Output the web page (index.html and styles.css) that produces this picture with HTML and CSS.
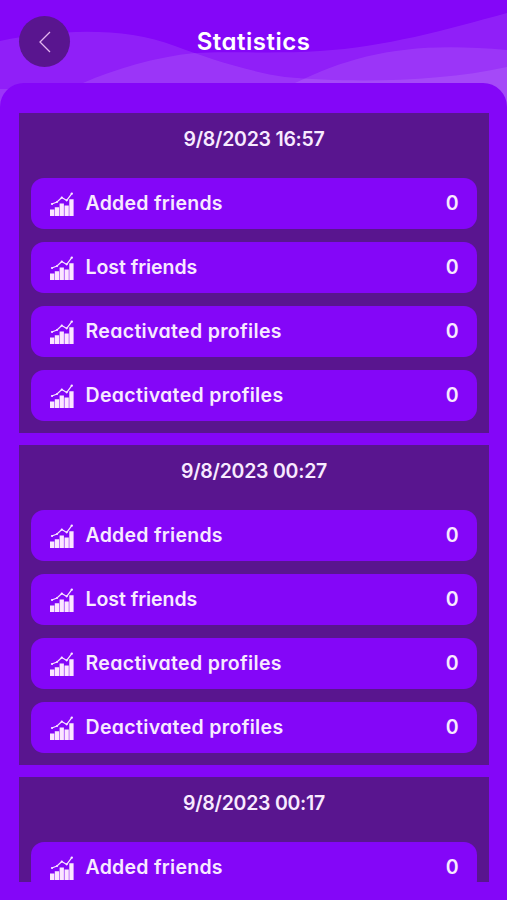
FILE: index.html
```html
<!DOCTYPE html>
<html lang="en">
<head>
<meta charset="utf-8">
<title>Statistics</title>
<link rel="stylesheet" href="styles.css">
</head>
<body>
<svg class="defs" width="0" height="0" aria-hidden="true">
  <symbol id="chart" viewBox="0 0 24 25">
    <path fill="currentColor" d="M0 17.500h4.300V24H0zM4.800 15.300h4.300V24H4.800zM9.600 11.500h4.300V24H9.600zM14.500 13.600h4.300V24h-4.300zM19.300 7.300h4.300V24h-4.300z"/>
    <path fill="none" stroke="currentColor" stroke-width="1.2" d="M1.800 12 7 10l4.800-4.400 4.900 2.800L21.800 1.600"/>
    <g fill="currentColor"><circle cx="2" cy="12" r="1.100"/><circle cx="7" cy="10" r="1"/><circle cx="11.800" cy="5.700" r="1.100"/><circle cx="16.700" cy="8.300" r="1.100"/><circle cx="21.800" cy="1.600" r="1.200"/></g>
  </symbol>
</svg>
<header class="header">
  <svg class="waves" viewBox="0 0 507 110" aria-hidden="true">
    <path d="M0 41C60 29 125 27 175 46C205 57 245 71 285 77C350 83 440 82 507 67V110H0z"/>
    <path d="M83 83C115 69 155 57 195 53C225 51 275 54 320 51C385 47 445 30 507 13V110H83z"/>
    <path d="M295 83C355 54 410 41 507 50V110H295zM0 89h8v21H0z"/>
  </svg>
  <button class="back" aria-label="Back"><svg viewBox="0 0 12 22"><path d="M11 1 1 11l10 10"/></svg></button>
  <h1 class="title">Statistics</h1>
</header>
<main class="panel">
  <div class="list">
    <section class="card">
      <h2 class="date">9/8/2023 16:57</h2>
      <div class="row"><svg class="icon"><use href="#chart"/></svg><span class="label added">Added friends</span><span class="value">0</span></div>
      <div class="row"><svg class="icon"><use href="#chart"/></svg><span class="label lost">Lost friends</span><span class="value">0</span></div>
      <div class="row"><svg class="icon"><use href="#chart"/></svg><span class="label profiles">Reactivated profiles</span><span class="value">0</span></div>
      <div class="row"><svg class="icon"><use href="#chart"/></svg><span class="label profiles">Deactivated profiles</span><span class="value">0</span></div>
    </section>
    <section class="card">
      <h2 class="date">9/8/2023 00:27</h2>
      <div class="row"><svg class="icon"><use href="#chart"/></svg><span class="label added">Added friends</span><span class="value">0</span></div>
      <div class="row"><svg class="icon"><use href="#chart"/></svg><span class="label lost">Lost friends</span><span class="value">0</span></div>
      <div class="row"><svg class="icon"><use href="#chart"/></svg><span class="label profiles">Reactivated profiles</span><span class="value">0</span></div>
      <div class="row"><svg class="icon"><use href="#chart"/></svg><span class="label profiles">Deactivated profiles</span><span class="value">0</span></div>
    </section>
    <section class="card">
      <h2 class="date">9/8/2023 00:17</h2>
      <div class="row"><svg class="icon"><use href="#chart"/></svg><span class="label added">Added friends</span><span class="value">0</span></div>
    </section>
  </div>
</main>
</body>
</html>
```
FILE: styles.css
```css
* { box-sizing: border-box; }
body {
  margin: 0;
  height: 900px;
  overflow: hidden;
  background: #8406f8;
  color: #f8eaff;
  font-family: Inter, "Open Sans", sans-serif;
  font-feature-settings: "cv11";
  font-weight: 600;
}
.defs { position: absolute; }
.header {
  position: relative;
  height: 83px;
  display: grid;
  grid-template-columns: 51px 1fr 51px;
  align-items: center;
  padding: 0 19px;
}
.waves {
  position: absolute;
  left: 0;
  top: 0;
  width: 507px;
  height: 110px;
  fill: #fff;
  fill-opacity: .1;
}
.back {
  position: relative;
  width: 51px;
  height: 51px;
  padding: 0;
  border: 0;
  border-radius: 50%;
  background: #59158f;
  display: flex;
  align-items: center;
  justify-content: center;
}
.back svg {
  width: 12px;
  height: 22px;
  fill: none;
  stroke: #e3b5ef;
  stroke-width: 1.3;
}
.title {
  position: relative;
  margin: 0;
  padding-top: 1px;
  text-align: center;
  font-size: 24px;
  letter-spacing: .5px;
  line-height: 32px;
  font-weight: 600;
  color: #fff;
}
.panel {
  position: relative;
  height: 817px;
  padding: 30px 18px 18px 19px;
  border-radius: 24px 24px 0 0;
  background: #8406f8;
}
.list {
  height: 769px;
  overflow: hidden;
  display: flex;
  flex-direction: column;
  gap: 12px;
}
.card {
  flex: none;
  height: 320px;
  padding: 0 12px;
  background: #59158f;
  display: flex;
  flex-direction: column;
  gap: 12.5px;
}
.date {
  margin: 0;
  height: 52px;
  line-height: 52px;
  text-align: center;
  font-size: 19.5px;
  font-weight: 600;
  letter-spacing: -.25px;
}
.row {
  flex: none;
  height: 51.5px;
  padding: 0 18.5px;
  border-radius: 13px;
  background: #8406f8;
  display: flex;
  align-items: center;
}
.icon { width: 24px; height: 25px; margin: 2px 12px 0 0; color: #fbe6ff; }
.label { font-size: 19.5px; line-height: 28px; white-space: nowrap; }
.added { letter-spacing: .27px; }
.lost { letter-spacing: -.05px; }
.profiles { letter-spacing: .34px; }
.value { margin-left: auto; font-size: 19.5px; line-height: 28px; }
```
